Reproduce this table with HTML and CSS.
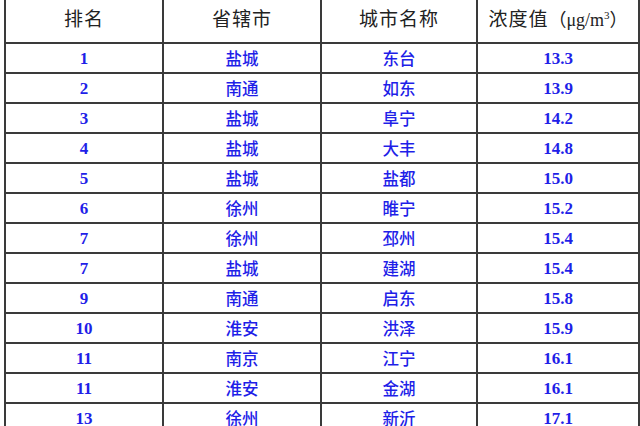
FILE: index.html
```html
<!DOCTYPE html>
<html lang="zh">
<head>
<meta charset="utf-8">
<link rel="stylesheet" href="styles.css">
</head>
<body>
<table class="rank">
  <colgroup>
    <col class="c1"><col class="c2"><col class="c3"><col class="c4">
  </colgroup>
  <thead>
    <tr>
      <th>排名</th>
      <th>省辖市</th>
      <th>城市名称</th>
      <th>浓度值<span class="unit">（μg/m<sup>3</sup>）</span></th>
    </tr>
  </thead>
  <tbody>
    <tr><td class="num">1</td><td>盐城</td><td>东台</td><td class="num">13.3</td></tr>
    <tr><td class="num">2</td><td>南通</td><td>如东</td><td class="num">13.9</td></tr>
    <tr><td class="num">3</td><td>盐城</td><td>阜宁</td><td class="num">14.2</td></tr>
    <tr><td class="num">4</td><td>盐城</td><td>大丰</td><td class="num">14.8</td></tr>
    <tr><td class="num">5</td><td>盐城</td><td>盐都</td><td class="num">15.0</td></tr>
    <tr><td class="num">6</td><td>徐州</td><td>睢宁</td><td class="num">15.2</td></tr>
    <tr><td class="num">7</td><td>徐州</td><td>邳州</td><td class="num">15.4</td></tr>
    <tr><td class="num">7</td><td>盐城</td><td>建湖</td><td class="num">15.4</td></tr>
    <tr><td class="num">9</td><td>南通</td><td>启东</td><td class="num">15.8</td></tr>
    <tr><td class="num">10</td><td>淮安</td><td>洪泽</td><td class="num">15.9</td></tr>
    <tr><td class="num">11</td><td>南京</td><td>江宁</td><td class="num">16.1</td></tr>
    <tr><td class="num">11</td><td>淮安</td><td>金湖</td><td class="num">16.1</td></tr>
    <tr><td class="num">13</td><td>徐州</td><td>新沂</td><td class="num">17.1</td></tr>
  </tbody>
</table>
</body>
</html>
```

FILE: styles.css
```css
html, body {
  margin: 0;
  padding: 0;
  background: #ffffff;
  overflow: hidden;
}

.rank {
  margin: -10px 0 0 4px;
  border-collapse: collapse;
  table-layout: fixed;
  width: 634px;
}

.c1 { width: 158px; }
.c2 { width: 158px; }
.c3 { width: 156px; }
.c4 { width: 162px; }

.rank th,
.rank td {
  border: 2px solid #3a3a3a;
  text-align: center;
  padding: 0;
}

.rank th {
  height: 50px;
  font-family: "Noto Sans CJK SC", "Liberation Sans", sans-serif;
  font-weight: 400;
  font-size: 19px;
  letter-spacing: 1px;
  color: #222222;
}

.unit {
  font-family: "Liberation Serif", "Noto Sans CJK SC", serif;
  font-size: 18px;
  letter-spacing: 0;
}

.unit sup {
  font-size: 11px;
  vertical-align: 7px;
  line-height: 0;
}

.rank td {
  height: 28px;
  font-family: "Noto Sans CJK SC", "Liberation Sans", sans-serif;
  font-weight: 500;
  font-size: 16.5px;
  color: #1f1fe8;
  line-height: 1;
}

.rank td.num {
  font-family: "Liberation Serif", serif;
  font-weight: 700;
  font-size: 17px;
}
```
